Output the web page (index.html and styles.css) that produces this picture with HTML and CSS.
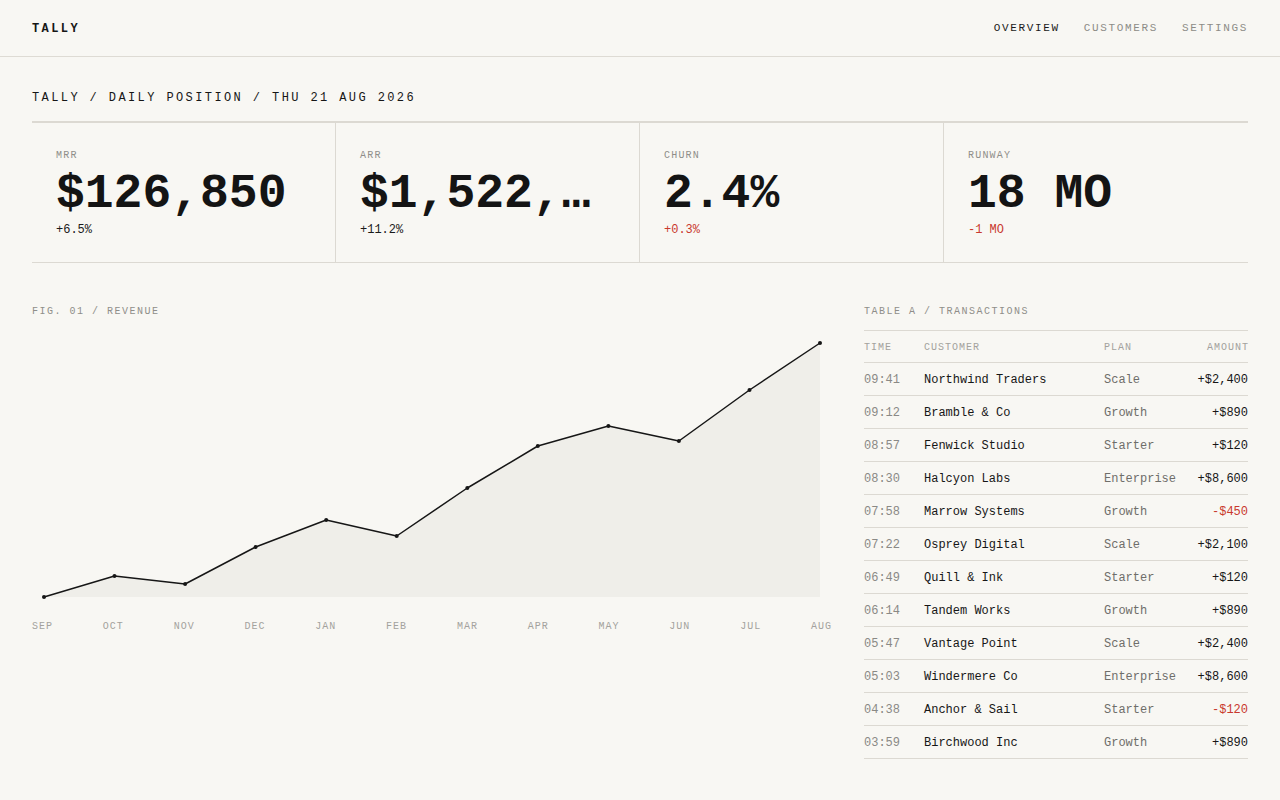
FILE: index.html
```html
<!DOCTYPE html>
<html lang="en">
<head>
<meta charset="utf-8">
<title>Tally — Overview</title>
<link rel="stylesheet" href="styles.css">
</head>
<body>
<header class="topbar">
  <div class="brand">TALLY</div>
  <nav class="nav">
    <a class="nav-link is-active" href="#">OVERVIEW</a>
    <a class="nav-link" href="#">CUSTOMERS</a>
    <a class="nav-link" href="#">SETTINGS</a>
  </nav>
</header>

<main class="page">
  <h1 class="crumb">TALLY / DAILY POSITION / THU 21 AUG 2026</h1>

  <section class="metrics">
    <div class="metric">
      <div class="metric-label">MRR</div>
      <div class="metric-value">$126,850</div>
      <div class="metric-delta">+6.5%</div>
    </div>
    <div class="metric">
      <div class="metric-label">ARR</div>
      <div class="metric-value" title="$1,522,200">$1,522,…</div>
      <div class="metric-delta">+11.2%</div>
    </div>
    <div class="metric">
      <div class="metric-label">CHURN</div>
      <div class="metric-value">2.4%</div>
      <div class="metric-delta is-bad">+0.3%</div>
    </div>
    <div class="metric">
      <div class="metric-label">RUNWAY</div>
      <div class="metric-value">18 MO</div>
      <div class="metric-delta is-bad">-1 MO</div>
    </div>
  </section>

  <section class="lower">
    <figure class="figure">
      <figcaption class="caption">FIG. 01 / REVENUE</figcaption>
      <svg class="chart" viewBox="0 0 800 278" width="800" height="278">
        <polygon class="chart-area" points="12,266 82.5,245 153.1,253 223.6,216 294.2,189 364.7,205 435.3,157 505.8,115 576.4,95 646.9,110 717.5,59 788,12 788,266"/>
        <polyline class="chart-line" points="12,266 82.5,245 153.1,253 223.6,216 294.2,189 364.7,205 435.3,157 505.8,115 576.4,95 646.9,110 717.5,59 788,12"/>
        <g class="chart-dots">
          <circle cx="12" cy="266" r="2"/>
          <circle cx="82.5" cy="245" r="2"/>
          <circle cx="153.1" cy="253" r="2"/>
          <circle cx="223.6" cy="216" r="2"/>
          <circle cx="294.2" cy="189" r="2"/>
          <circle cx="364.7" cy="205" r="2"/>
          <circle cx="435.3" cy="157" r="2"/>
          <circle cx="505.8" cy="115" r="2"/>
          <circle cx="576.4" cy="95" r="2"/>
          <circle cx="646.9" cy="110" r="2"/>
          <circle cx="717.5" cy="59" r="2"/>
          <circle cx="788" cy="12" r="2"/>
        </g>
      </svg>
      <div class="axis">
        <span>SEP</span><span>OCT</span><span>NOV</span><span>DEC</span>
        <span>JAN</span><span>FEB</span><span>MAR</span><span>APR</span>
        <span>MAY</span><span>JUN</span><span>JUL</span><span>AUG</span>
      </div>
    </figure>

    <section class="ledger">
      <div class="caption">TABLE A / TRANSACTIONS</div>
      <div class="table">
        <div class="row row-head">
          <span>TIME</span><span>CUSTOMER</span><span>PLAN</span><span class="amt">AMOUNT</span>
        </div>
        <div class="row"><span class="time">09:41</span><span class="cust">Northwind Traders</span><span class="plan">Scale</span><span class="amt">+$2,400</span></div>
        <div class="row"><span class="time">09:12</span><span class="cust">Bramble &amp; Co</span><span class="plan">Growth</span><span class="amt">+$890</span></div>
        <div class="row"><span class="time">08:57</span><span class="cust">Fenwick Studio</span><span class="plan">Starter</span><span class="amt">+$120</span></div>
        <div class="row"><span class="time">08:30</span><span class="cust">Halcyon Labs</span><span class="plan">Enterprise</span><span class="amt">+$8,600</span></div>
        <div class="row"><span class="time">07:58</span><span class="cust">Marrow Systems</span><span class="plan">Growth</span><span class="amt is-bad">-$450</span></div>
        <div class="row"><span class="time">07:22</span><span class="cust">Osprey Digital</span><span class="plan">Scale</span><span class="amt">+$2,100</span></div>
        <div class="row"><span class="time">06:49</span><span class="cust">Quill &amp; Ink</span><span class="plan">Starter</span><span class="amt">+$120</span></div>
        <div class="row"><span class="time">06:14</span><span class="cust">Tandem Works</span><span class="plan">Growth</span><span class="amt">+$890</span></div>
        <div class="row"><span class="time">05:47</span><span class="cust">Vantage Point</span><span class="plan">Scale</span><span class="amt">+$2,400</span></div>
        <div class="row"><span class="time">05:03</span><span class="cust">Windermere Co</span><span class="plan">Enterprise</span><span class="amt">+$8,600</span></div>
        <div class="row"><span class="time">04:38</span><span class="cust">Anchor &amp; Sail</span><span class="plan">Starter</span><span class="amt is-bad">-$120</span></div>
        <div class="row"><span class="time">03:59</span><span class="cust">Birchwood Inc</span><span class="plan">Growth</span><span class="amt">+$890</span></div>
      </div>
    </section>
  </section>
</main>
</body>
</html>
```

FILE: styles.css
```css
* {
  box-sizing: border-box;
}

html,
body {
  margin: 0;
  padding: 0;
  background: #f8f7f3;
  color: #161616;
  font-family: "Liberation Mono", "DejaVu Sans Mono", monospace;
}

/* top bar */
.topbar {
  height: 57px;
  padding: 0 32px;
  display: flex;
  align-items: center;
  justify-content: space-between;
  border-bottom: 1px solid #dedbd4;
}

.brand {
  font-size: 12px;
  font-weight: 700;
  letter-spacing: 0.2em;
  line-height: 16px;
  padding-top: 1px;
}

.nav {
  display: flex;
  gap: 24px;
}

.nav-link {
  font-size: 11px;
  letter-spacing: 0.15em;
  line-height: 16px;
  color: #8d8c87;
  text-decoration: none;
}

.nav-link.is-active {
  color: #1a1a1a;
}

/* page body */
.page {
  padding: 0 32px;
}

.crumb {
  margin: 33px 0 15px;
  font-size: 12px;
  font-weight: 400;
  letter-spacing: 0.2em;
  line-height: 16px;
  color: #161616;
}

/* metric strip */
.metrics {
  display: grid;
  grid-template-columns: repeat(4, 1fr);
  border-top: 2px solid #dcd9d2;
  border-bottom: 1px solid #dcd9d2;
}

.metric {
  padding: 27px 24px 24px;
  border-right: 1px solid #dcd9d2;
  min-width: 0;
}

.metric:last-child {
  border-right: 0;
}

.metric-label {
  font-size: 10px;
  line-height: 12px;
  letter-spacing: 0.12em;
  color: #8f8e89;
}

.metric-value {
  margin-top: 4px;
  font-size: 48px;
  line-height: 56px;
  font-weight: 700;
  white-space: nowrap;
  color: #141414;
}

.metric-delta {
  margin-top: 0;
  font-size: 12px;
  line-height: 16px;
  color: #1a1a1a;
}

.metric-delta.is-bad {
  color: #c9392e;
}

/* chart + table */
.lower {
  display: grid;
  grid-template-columns: 1fr 384px;
  gap: 32px;
  margin-top: 43px;
}

.figure {
  margin: 0;
}

.caption {
  font-size: 10px;
  line-height: 12px;
  letter-spacing: 0.15em;
  color: #8f8e89;
}

.chart {
  display: block;
  margin-top: 13px;
  width: 800px;
  height: 278px;
}

.chart-area {
  fill: #efeee9;
}

.chart-line {
  fill: none;
  stroke: #161616;
  stroke-width: 1.5;
  stroke-linejoin: round;
}

.chart-dots circle {
  fill: #161616;
}

.axis {
  margin-top: 12px;
  display: flex;
  justify-content: space-between;
  font-size: 10px;
  line-height: 12px;
  letter-spacing: 0.1em;
  color: #a3a29d;
}

/* transactions */
.table {
  margin-top: 12px;
  border-top: 1px solid #dcd9d2;
}

.row {
  display: grid;
  grid-template-columns: 60px 180px 1fr auto;
  align-items: center;
  height: 33px;
  padding-top: 2px;
  border-bottom: 1px solid #dcd9d2;
  font-size: 12px;
}

.row-head {
  height: 32px;
  font-size: 10px;
  letter-spacing: 0.1em;
  color: #a3a29d;
}

.row-head .amt {
  color: #a3a29d;
  margin-right: -1px;
}

.time {
  color: #8a8985;
}

.cust {
  color: #161616;
}

.plan {
  color: #6f6e6a;
}

.amt {
  text-align: right;
  color: #161616;
}

.amt.is-bad {
  color: #c9392e;
}
```
